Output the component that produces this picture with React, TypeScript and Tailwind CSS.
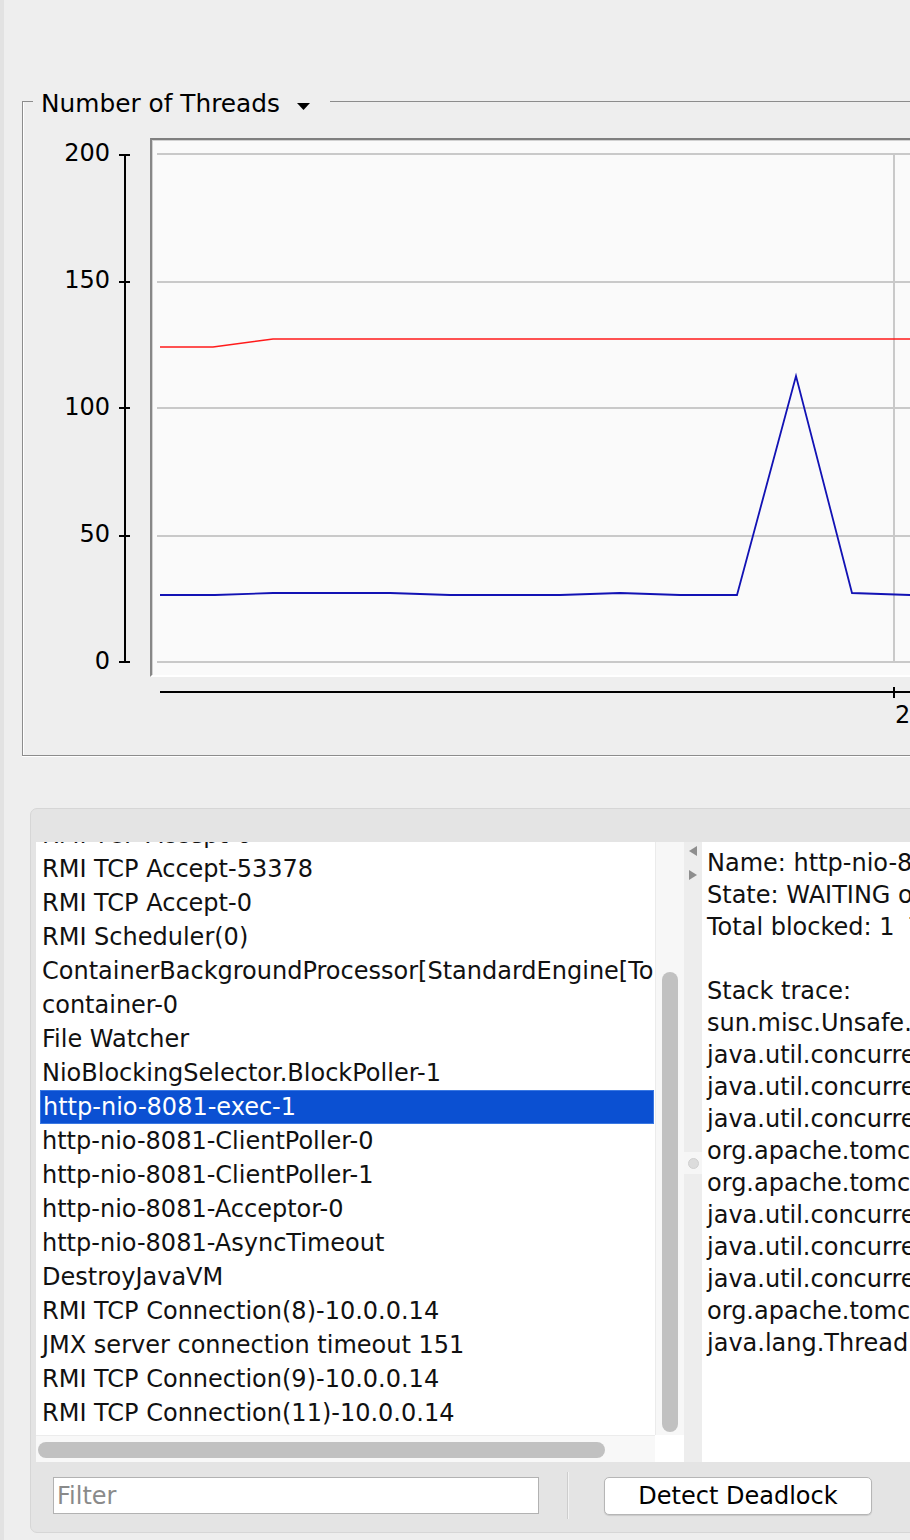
import React from "react";

const threads = [
  "RMI TCP Accept-0",
  "RMI TCP Accept-53378",
  "RMI TCP Accept-0",
  "RMI Scheduler(0)",
  "ContainerBackgroundProcessor[StandardEngine[Tomcat]]",
  "container-0",
  "File Watcher",
  "NioBlockingSelector.BlockPoller-1",
  "http-nio-8081-exec-1",
  "http-nio-8081-ClientPoller-0",
  "http-nio-8081-ClientPoller-1",
  "http-nio-8081-Acceptor-0",
  "http-nio-8081-AsyncTimeout",
  "DestroyJavaVM",
  "RMI TCP Connection(8)-10.0.0.14",
  "JMX server connection timeout 151",
  "RMI TCP Connection(9)-10.0.0.14",
  "RMI TCP Connection(11)-10.0.0.14",
];

const details = [
  "Name: http-nio-8081-exec-1",
  "State: WAITING on java.util.concurrent.locks.AbstractQueuedSynchronizer$ConditionObject@3a1f5c2e",
  "Total blocked: 1  Total waited: 42",
  "",
  "Stack trace:",
  "sun.misc.Unsafe.park(Native Method)",
  "java.util.concurrent.locks.LockSupport.park(LockSupport.java:175)",
  "java.util.concurrent.locks.AbstractQueuedSynchronizer$ConditionObject.await(AbstractQueuedSynchronizer.java:2039)",
  "java.util.concurrent.LinkedBlockingQueue.take(LinkedBlockingQueue.java:442)",
  "org.apache.tomcat.util.threads.TaskQueue.take(TaskQueue.java:103)",
  "org.apache.tomcat.util.threads.TaskQueue.take(TaskQueue.java:31)",
  "java.util.concurrent.ThreadPoolExecutor.getTask(ThreadPoolExecutor.java:1074)",
  "java.util.concurrent.ThreadPoolExecutor.runWorker(ThreadPoolExecutor.java:1134)",
  "java.util.concurrent.ThreadPoolExecutor$Worker.run(ThreadPoolExecutor.java:624)",
  "org.apache.tomcat.util.threads.TaskThread$WrappingRunnable.run(TaskThread.java:61)",
  "java.lang.Thread.run(Thread.java:748)",
];

const yLabels = ["200", "150", "100", "50", "0"];
const gridY = [14, 142, 268, 396, 522];
const tickY = [17, 144, 270, 398, 524];

// peak / live threads, plot coords
const redPts = "8,207 61,207 121,199 800,199";
const bluePts =
  "8,455 63,455 121,453 238,453 298,455 408,455 468,453 528,455 585,455 644,236 700,453 758,455 800,455";

function ThreadsChart() {
  return (
    <div className="mt-[20px] flex items-start">
      <div className="mt-[1px] flex h-[536px] w-[90px] flex-col items-end justify-between pr-[3px]">
        {yLabels.map((l) => (
          <span key={l} className="text-[24px] leading-[28px]">
            {l}
          </span>
        ))}
      </div>
      <svg width={22} height={540} className="shrink-0">
        <line x1={12} y1={17} x2={12} y2={524} stroke="#000" strokeWidth={2} />
        {tickY.map((y) => (
          <line key={y} x1={6} y1={y} x2={17} y2={y} stroke="#000" strokeWidth={2} />
        ))}
      </svg>
      <div className="ml-[15px] flex flex-1 flex-col overflow-hidden">
        <div className="h-[539px] overflow-hidden border-t-2 border-l-2 border-b-2 border-t-[#7f7f7f] border-l-[#878787] border-b-white bg-[#fafafa] shadow-[inset_1px_1px_0_#d2d2d2]">
          <svg width={800} height={535}>
            {gridY.map((y) => (
              <line key={y} x1={5} y1={y} x2={800} y2={y} stroke="#c9c9c9" strokeWidth={2} />
            ))}
            <line x1={742} y1={14} x2={742} y2={522} stroke="#c9c9c9" strokeWidth={2} />
            <polyline points={redPts} fill="none" stroke="#ff1a1a" strokeWidth={1.6} />
            <polyline points={bluePts} fill="none" stroke="#1212b4" strokeWidth={1.8} />
          </svg>
        </div>
        <svg width={800} height={24}>
          <line x1={10} y1={15} x2={800} y2={15} stroke="#000" strokeWidth={2} />
          <line x1={744} y1={10} x2={744} y2={21} stroke="#000" strokeWidth={2} />
        </svg>
        <div className="pl-[745px] text-[24px] leading-[28px]">2</div>
      </div>
    </div>
  );
}

function ThreadList() {
  return (
    <div className="flex w-[648px] shrink-0 flex-col">
      <div className="flex h-[593px]">
        <div className="h-full w-[619px] overflow-hidden bg-white">
          <div className="-mt-[24px]">
            {threads.map((t, i) => (
              <div
                key={i}
                className={`ml-[4px] flex h-[34px] w-[614px] items-center whitespace-nowrap pl-[2px] text-[24px] ${
                  i === 8 ? "border border-[#3a78e2] bg-[#0b50d2] pl-[1px] text-white" : "text-[#111]"
                }`}
              >
                {t}
              </div>
            ))}
          </div>
        </div>
        <div className="h-full w-[29px] border-l border-[#ebebeb] bg-[#f7f7f7] pt-[130px] pl-[6px]">
          <div className="h-[460px] w-[16px] rounded-full bg-[#c1c1c1]" />
        </div>
      </div>
      <div className="flex h-[27px]">
        <div className="w-[619px] border-t border-[#ececec] bg-[#f8f8f8] pt-[6px] pl-[2px]">
          <div className="h-[16px] w-[567px] rounded-full bg-[#c1c1c1]" />
        </div>
        <div className="w-[29px] bg-white" />
      </div>
    </div>
  );
}

function Divider() {
  return (
    <div className="flex w-[18px] shrink-0 flex-col items-center bg-[#ededed]">
      <svg width={12} height={12} className="mt-[3px]">
        <polygon points="10,1 10,11 2,6" fill="#8e8e8e" />
      </svg>
      <svg width={12} height={12} className="mt-[12px]">
        <polygon points="2,1 2,11 10,6" fill="#8e8e8e" />
      </svg>
      <div className="mt-[271px] flex h-[22px] w-[18px] items-center justify-center bg-[#f6f6f6]">
        <div className="h-[11px] w-[11px] rounded-full border border-[#d0d0d0] bg-[#dcdcdc]" />
      </div>
    </div>
  );
}

export default function App() {
  return (
    <div className="h-[1540px] w-[910px] overflow-hidden border-l-[4px] border-[#e2e2e2] bg-[#eeeeee] pt-[84px] font-['DejaVu_Sans',sans-serif] text-black">
      <fieldset className="ml-[18px] h-[672px] w-[908px] border border-[#8c8c8c] p-0 shadow-[inset_1px_0_0_#ffffff,0_1px_0_#ffffff]">
        <legend className="ml-[10px] flex items-center pt-[6px] pl-[8px] pr-[20px] text-[24.8px] leading-[28px]">
          <span>Number of Threads</span>
          <svg width={13} height={7} className="ml-[17px] mb-[-4px]">
            <polygon points="0,0 13,0 6.5,7" fill="#000" />
          </svg>
        </legend>
        <ThreadsChart />
      </fieldset>

      <div className="mt-[52px] ml-[26px] h-[725px] w-[900px] rounded-[7px] border border-[#d6d6d6] bg-[#e4e4e4] pt-[33px] pl-[5px]">
        <div className="flex h-[620px]">
          <ThreadList />
          <Divider />
          <div className="flex-1 overflow-hidden bg-white pt-[5px] pl-[5px]">
            {details.map((d, i) => (
              <div key={i} className="h-[32px] whitespace-pre text-[24px] leading-[32px] text-[#111]">
                {d}
              </div>
            ))}
          </div>
        </div>
        <div className="flex h-[67px] items-center">
          <input
            placeholder="Filter"
            className="ml-[17px] h-[37px] w-[486px] border border-[#b2b2b2] bg-white pl-[3px] text-[24px] outline-none placeholder:text-[#8a8a8a]"
          />
          <div className="ml-[28px] flex h-[47px]">
            <div className="w-px bg-[#cdcdcd]" />
            <div className="w-px bg-[#f3f3f3]" />
          </div>
          <button className="ml-[35px] h-[38px] w-[268px] rounded-[5px] border border-[#b6b6b6] bg-white text-[24px] leading-[34px] shadow-[0_1px_1px_rgba(0,0,0,0.12)]">
            Detect Deadlock
          </button>
        </div>
      </div>
    </div>
  );
}
